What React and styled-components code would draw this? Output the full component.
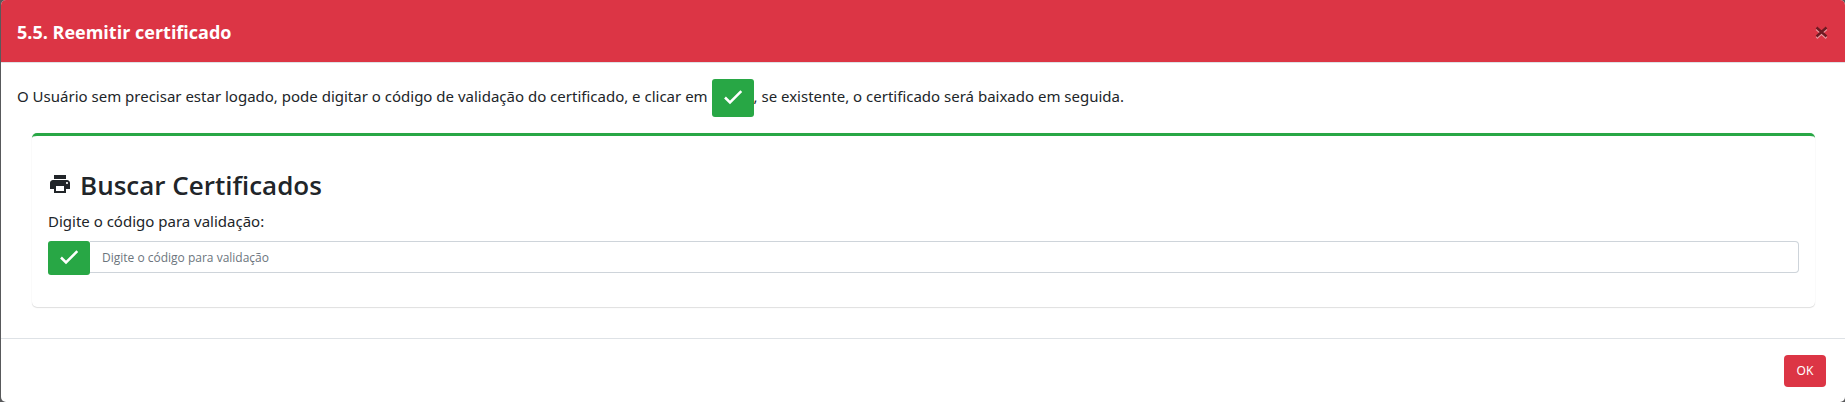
import React, { useState } from "react";
import styled, { createGlobalStyle, css } from "styled-components";
import { MdPrint } from "react-icons/md";

const displayFont = `"Segoe UI", "Open Sans", "Noto Sans", sans-serif`;

const GlobalStyle = createGlobalStyle`
  *, *::before, *::after { box-sizing: border-box; }
  body {
    margin: 0;
    background: #58595b;
    color: #212529;
    font-family: "Segoe UI", "Noto Sans", "Open Sans", sans-serif;
    font-size: 15px;
    line-height: 24px;
  }
`;

const Dialog = styled.section`
  margin-left: 1px;
  background: #fff;
  border-radius: 5px;
  overflow: hidden;
`;

const Header = styled.header`
  display: flex;
  align-items: center;
  justify-content: space-between;
  padding: 17px 16px 15px;
  background: #dc3545;
  border-bottom: 1px solid #dee2e6;
`;

const Title = styled.h5`
  margin: 0;
  color: #fff;
  font-family: ${displayFont};
  font-size: 18px;
  font-weight: 700;
  line-height: 30px;
`;

const CloseButton = styled.button`
  display: flex;
  padding: 0;
  border: 0;
  background: none;
  cursor: pointer;
`;

const Body = styled.div`
  padding: 16px 16px 31px;
`;

const Intro = styled.p`
  margin: 0 0 16px;
`;

const glyph = css`
  width: 24px;
  height: 24px;
  margin-bottom: 2px;
`;

const CheckSvg = styled.svg`
  ${glyph}
  fill: none;
  stroke: currentColor;
  stroke-width: 2.5;
`;

const CheckGlyph = () => (
  <CheckSvg viewBox="0 0 24 24" aria-hidden="true">
    <path d="M4 12.500L9 17.500L20.300 6.200" />
  </CheckSvg>
);

const PrintGlyph = styled(MdPrint)`
  ${glyph}
`;

const Button = styled.button`
  display: inline-flex;
  align-items: center;
  justify-content: center;
  height: ${(p) => p.$height}px;
  width: 42px;
  padding: 0;
  border: 0;
  border-radius: ${(p) => p.$radius || 3}px;
  background: ${(p) => (p.$tone === "danger" ? "#dc3545" : "#28a745")};
  color: #fff;
  font: inherit;
  font-size: 12px;
  vertical-align: middle;
  cursor: pointer;
`;

const Card = styled.form`
  margin: 0 14px 0 15px;
  padding: 33px 16px 32px;
  border-top: 3px solid #28a745;
  border-radius: 5px;
  box-shadow: 0 1px 1px rgba(0, 0, 0, 0.12), 0 0 1px rgba(0, 0, 0, 0.1);
`;

const CardTitle = styled.h3`
  display: flex;
  align-items: center;
  gap: 8px;
  margin: 0 0 8px;
  font-family: ${displayFont};
  font-size: 26px;
  font-weight: 600;
  line-height: 32px;
`;

const Label = styled.label`
  display: block;
  margin-bottom: 8px;
`;

const InputGroup = styled.div`
  display: flex;
  align-items: flex-start;
`;

const CodeInput = styled.input`
  flex: 1;
  min-width: 0;
  height: 32px;
  padding: 0 12px;
  border: 1px solid #ced4da;
  border-left: 0;
  border-radius: 0 4px 4px 0;
  color: #495057;
  font-family: ${displayFont};
  font-size: 12px;

  &::placeholder { color: #6c757d; opacity: 1; }
`;

const Footer = styled.footer`
  display: flex;
  justify-content: flex-end;
  padding: 16px 19px 15px;
  border-top: 1px solid #dee2e6;
`;

export default function App() {
  const [code, setCode] = useState("");

  return (
    <>
      <GlobalStyle />
      <Dialog role="dialog" aria-labelledby="dialog-title">
        <Header>
          <Title id="dialog-title">5.5. Reemitir certificado</Title>
          <CloseButton type="button" aria-label="Fechar">
            <svg width="14" height="14" viewBox="0 0 14 14" fill="none" strokeWidth="2.4">
              <path d="M1.500 4L11.500 13M11.500 4L1.500 13" stroke="#eb9aa2" />
              <path d="M1.500 2.500L11.500 11.500M11.500 2.500L1.500 11.500" stroke="#6e1a22" />
            </svg>
          </CloseButton>
        </Header>
        <Body>
          <Intro>
            O Usuário sem precisar estar logado, pode digitar o código de validação do certificado, e clicar em{" "}
            <Button type="button" aria-label="Validar" $height={38}>
              <CheckGlyph />
            </Button>
            , se existente, o certificado será baixado em seguida.
          </Intro>
          <Card onSubmit={(e) => e.preventDefault()}>
            <CardTitle>
              <PrintGlyph />
              Buscar Certificados
            </CardTitle>
            <Label htmlFor="code">Digite o código para validação:</Label>
            <InputGroup>
              <Button type="submit" aria-label="Buscar" $height={34}>
                <CheckGlyph />
              </Button>
              <CodeInput
                id="code"
                type="text"
                placeholder="Digite o código para validação"
                value={code}
                onChange={(e) => setCode(e.target.value)}
              />
            </InputGroup>
          </Card>
        </Body>
        <Footer>
          <Button type="button" $tone="danger" $height={32} $radius={4}>
            OK
          </Button>
        </Footer>
      </Dialog>
    </>
  );
}
